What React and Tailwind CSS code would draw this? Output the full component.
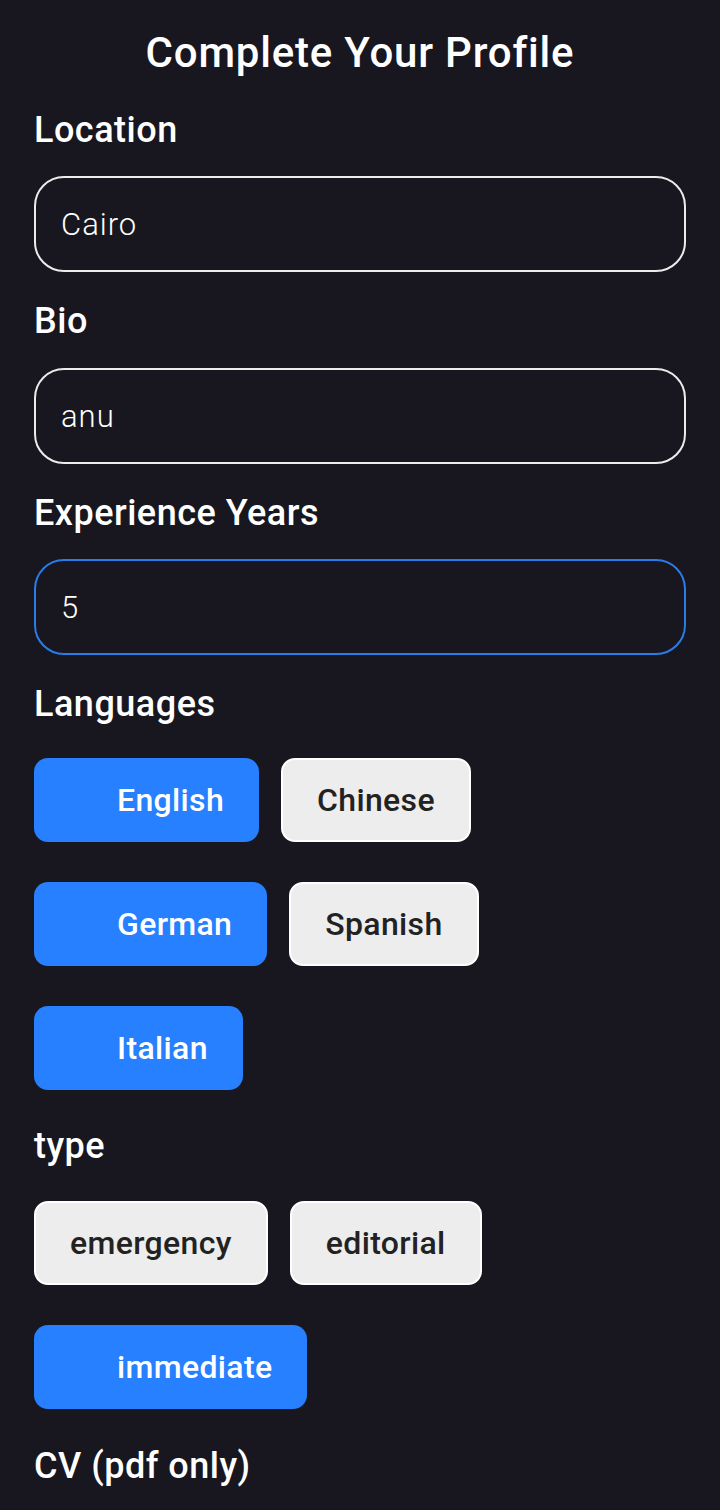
import { useState } from 'react'

const LANGUAGES = ['English', 'Chinese', 'German', 'Spanish', 'Italian']
const TYPES = ['emergency', 'editorial', 'immediate']

const Label = ({ children, className = '' }) => (
  <div
    className={`h-10 flex items-center text-[36px] font-medium tracking-[0.5px] text-white ${className}`}
  >
    {children}
  </div>
)

const Field = ({ value, focused, className = '' }) => (
  <div
    className={`h-24 rounded-[30px] border-2 flex items-center pl-[25px] pr-[25px] pt-[3px] ${
      focused ? 'border-[#2a7de8]' : 'border-[#ececec]'
    } ${className}`}
  >
    <span className="text-[31px] font-light tracking-[1px] text-white">{value}</span>
  </div>
)

const Chip = ({ text, selected }) => (
  <div
    className={`h-[84px] rounded-[14px] flex items-center text-[32px] font-medium tracking-[0.35px] ${
      selected
        ? 'bg-[#2680ff] text-white pl-[83px] pr-[35px]'
        : 'bg-[#ededed] text-[#222222] border-2 border-white px-[34px]'
    }`}
  >
    {text}
  </div>
)

const ChipGroup = ({ items, selected, rows }) => (
  <div className="flex flex-col gap-[40px]">
    {rows.map((row, i) => (
      <div key={i} className="flex gap-[22px]">
        {row.map((idx) => (
          <Chip key={items[idx]} text={items[idx]} selected={selected.includes(items[idx])} />
        ))}
      </div>
    ))}
  </div>
)

const App = () => {
  const [languages] = useState(['English', 'German', 'Italian'])
  const [types] = useState(['immediate'])

  return (
    <div
      className="min-h-[1510px] bg-[#181720] px-[34px] pb-10"
      style={{ fontFamily: 'Roboto, "Noto Sans", sans-serif' }}
    >
      {/* Title */}
      <div className="h-[104px] flex items-center justify-center text-[42px] font-medium tracking-[0.8px] text-white">
        Complete Your Profile
      </div>

      <Label className="mt-[6px]">Location</Label>
      <Field value="Cairo" className="mt-[26px]" />

      <Label className="mt-[29px]">Bio</Label>
      <Field value="anu" className="mt-[27px]" />

      <Label className="mt-[29px]">Experience Years</Label>
      <Field value="5" focused className="mt-[26px]" />

      <Label className="mt-[29px]">Languages</Label>
      <div className="mt-[34px]">
        <ChipGroup items={LANGUAGES} selected={languages} rows={[[0, 1], [2, 3], [4]]} />
      </div>

      <Label className="mt-[36px]">type</Label>
      <div className="mt-[35px]">
        <ChipGroup items={TYPES} selected={types} rows={[[0, 1], [2]]} />
      </div>

      <Label className="mt-[37px]">CV (pdf only)</Label>
    </div>
  )
}

export default App
